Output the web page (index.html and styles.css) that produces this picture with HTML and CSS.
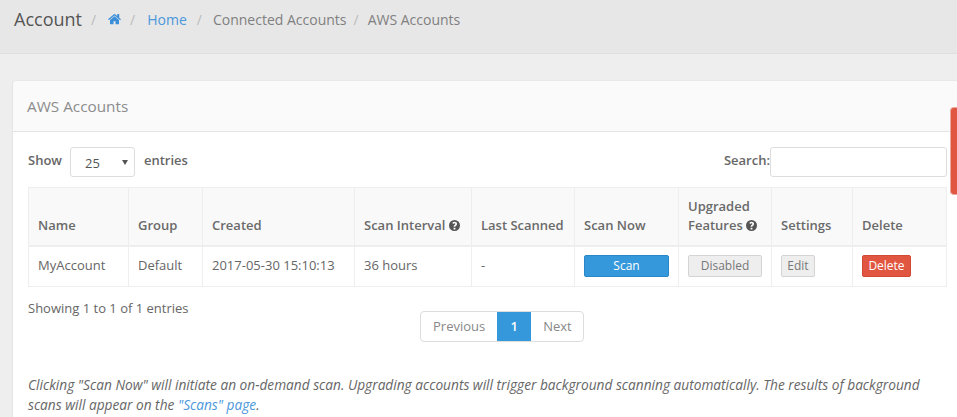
FILE: index.html
```html
<!DOCTYPE html>
<html lang="en">
<head>
<meta charset="utf-8">
<title>AWS Accounts</title>
<link rel="stylesheet" href="styles.css">
</head>
<body>
<header class="page-bar">
  <h1 class="page-title">Account</h1>
  <ol class="crumbs">
    <li class="sep first">/</li>
    <li><a href="#" class="home-icon"><svg width="13" height="11" viewBox="0 0 1664 1408"><path fill="currentColor" d="M1408 768v480q0 26-19 45t-45 19H960V928H704v384H320q-26 0-45-19t-19-45V768q0-1 .5-3t.5-3l575-474 575 474q1 2 1 6zm223-69-62 74q-8 9-21 11h-3q-13 0-21-7L832 200 140 777q-12 8-24 7-13-2-21-11l-62-74q-8-10-7-23.500t11-21.500L756 27q32-27 76-27t76 27l272 227V37q0-14 9-23t23-9h192q14 0 23 9t9 23v454l219 182q10 8 11 21.500t-7 23.500z"/></svg></a></li>
    <li class="sep">/</li>
    <li><a href="#" class="link home-link">Home</a></li>
    <li class="sep">/</li>
    <li class="crumb-a">Connected Accounts</li>
    <li class="sep">/</li>
    <li>AWS Accounts</li>
  </ol>
</header>
<main class="content">
  <section class="card">
    <div class="card-head">AWS Accounts</div>
    <div class="card-body">
      <div class="controls">
        <div class="length">
          <span class="bold">Show</span>
          <span class="select">25<svg class="caret" width="6" height="5" viewBox="0 0 6 5"><path fill="#555" d="M0 0h6L3 5z"/></svg></span>
          <span class="bold">entries</span>
        </div>
        <div class="search">
          <span class="bold">Search:</span>
          <input class="search-input" type="text" aria-label="Search">
        </div>
      </div>
      <table class="grid">
        <colgroup>
          <col class="c1"><col class="c2"><col class="c3"><col class="c4"><col class="c5"><col class="c6"><col class="c7"><col class="c8"><col class="c9">
        </colgroup>
        <thead>
          <tr>
            <th>Name</th>
            <th>Group</th>
            <th>Created</th>
            <th>Scan Interval <svg class="help" width="11" height="11" viewBox="0 0 24 24"><path fill="#555" fill-rule="evenodd" d="M12 0a12 12 0 1 0 0 24 12 12 0 0 0 0-24zm2 20.500h-4v-3.700h4zm2.600-9.300c-.6.800-1.500 1.300-2.100 1.800-.5.400-.6.700-.6 1.800h-3.700c0-2.300.6-3.300 1.700-4.100.9-.7 1.900-1.100 1.900-2.200 0-.8-.7-1.300-1.700-1.300-1.100 0-1.900.6-2.600 1.500L7.100 6.700C8.300 5 10 4 12.200 4c2.800 0 5.300 1.500 5.300 4.300 0 1.200-.4 2.100-.9 2.900z"/></svg></th>
            <th>Last Scanned</th>
            <th>Scan Now</th>
            <th>Upgraded<br>Features <svg class="help" width="11" height="11" viewBox="0 0 24 24"><path fill="#555" fill-rule="evenodd" d="M12 0a12 12 0 1 0 0 24 12 12 0 0 0 0-24zm2 20.500h-4v-3.700h4zm2.600-9.300c-.6.800-1.500 1.300-2.100 1.800-.5.400-.6.700-.6 1.800h-3.700c0-2.300.6-3.300 1.700-4.100.9-.7 1.900-1.100 1.900-2.200 0-.8-.7-1.300-1.700-1.300-1.100 0-1.900.6-2.600 1.500L7.100 6.700C8.300 5 10 4 12.200 4c2.800 0 5.300 1.500 5.300 4.300 0 1.200-.4 2.100-.9 2.900z"/></svg></th>
            <th>Settings</th>
            <th>Delete</th>
          </tr>
        </thead>
        <tbody>
          <tr>
            <td>MyAccount</td>
            <td>Default</td>
            <td>2017-05-30 15:10:13</td>
            <td>36 hours</td>
            <td>-</td>
            <td class="cell-btn"><a href="#" class="btn btn-blue btn-wide">Scan</a></td>
            <td class="cell-btn"><a href="#" class="btn btn-grey btn-disabled">Disabled</a></td>
            <td class="cell-btn"><a href="#" class="btn btn-grey btn-edit">Edit</a></td>
            <td class="cell-btn"><a href="#" class="btn btn-red">Delete</a></td>
          </tr>
        </tbody>
      </table>
      <div class="table-foot">
        <div class="info">Showing 1 to 1 of 1 entries</div>
        <nav class="pager">
          <a href="#" class="page">Previous</a>
          <a href="#" class="page active">1</a>
          <a href="#" class="page">Next</a>
        </nav>
      </div>
      <p class="note">Clicking "Scan Now" will initiate an on-demand scan. Upgrading accounts will trigger background scanning automatically. The results of background scans will appear on the <a href="#" class="link">"Scans" page</a>.</p>
    </div>
  </section>
</main>
<div class="side-tab"></div>
</body>
</html>
```
FILE: styles.css
```css
* { box-sizing: border-box; }
html, body { margin: 0; height: 417px; overflow: hidden; }
body {
  position: relative;
  background: #eeeeee;
  font-family: "Open Sans", sans-serif;
  font-size: 13px;
  line-height: 20px;
  color: #666;
}
a { text-decoration: none; }
.link { color: #4b98dc; }
.page-bar {
  height: 54px;
  background: #e7e7e7;
  border-bottom: 1px solid #dfdfdf;
  display: flex;
  align-items: flex-start;
  padding: 7px 0 0 14px;
}
.page-title {
  margin: 0;
  font-size: 18px;
  font-weight: 400;
  line-height: 24px;
  color: #555;
}
.crumbs {
  list-style: none;
  display: flex;
  margin: 0;
  padding: 3px 0 0;
  color: #808080;
  font-size: 14px;
  line-height: 20px;
}
.sep { color: #bbb; margin: 0 9px; }
.sep.first { margin: 0 12px 0 9px; }
.home-icon { color: #3a8fd8; display: block; }
.home-icon svg { display: block; margin-top: 4px; }
.home-link { margin: 0 1px 0 3px; }
.crumb-a { margin-left: 2px; margin-right: -2px; }
.content { padding: 26px 0 0 13px; }
.card {
  background: #fff;
  border-radius: 4px 0 0 4px;
  box-shadow: -1px 0 0 #e4e4e4;
  height: 341px;
}
.card-head {
  height: 52px;
  background: #fafafa;
  border-bottom: 1px solid #e4e4e4;
  border-top: 1px solid #e8e8e8;
  border-radius: 4px 0 0 0;
  padding: 14px 0 0 14px;
  font-size: 15.300px;
  line-height: 22px;
  color: #8c8c8c;
}
.card-body { padding: 15px 10px 0 15px; }
.controls {
  display: flex;
  justify-content: space-between;
  align-items: flex-start;
  height: 40px;
}
.bold { font-weight: 600; color: #666; }
.length { display: flex; align-items: flex-start; line-height: 26px; }
.select {
  position: relative;
  display: block;
  width: 65px;
  height: 30px;
  margin: 0 9px 0 8px;
  padding: 2px 0 0 14px;
  background: #fff;
  border: 1px solid #ddd;
  border-radius: 3px;
  color: #555;
  font-size: 13px;
}
.caret { position: absolute; right: 6px; top: 12px; }
.search { display: flex; align-items: flex-start; line-height: 26px; }
.search-input {
  display: block;
  width: 177px;
  height: 30px;
  border: 1px solid #ddd;
  border-radius: 3px;
  background: #fff;
}
.grid {
  border-collapse: collapse;
  table-layout: fixed;
  width: 918px;
}
.c1 { width: 100px; }
.c2 { width: 74px; }
.c3 { width: 152px; }
.c4 { width: 117px; }
.c5 { width: 103px; }
.c6 { width: 104px; }
.c7 { width: 93px; }
.c8 { width: 81px; }
.c9 { width: 94px; }
.grid th, .grid td {
  border: 1px solid #eeeeee;
  padding: 0 9px;
  text-align: left;
}
.grid th {
  height: 58px;
  background: #f9f9f9;
  vertical-align: bottom;
  padding-bottom: 10px;
  font-weight: 600;
  line-height: 19px;
  color: #6a6a6a;
  border-bottom-width: 2px;
}
.grid td { height: 41px; vertical-align: middle; padding-bottom: 2px; }
.grid td.cell-btn { padding-bottom: 1px; }
.help { vertical-align: -1px; }
.btn {
  display: inline-block;
  height: 22px;
  padding: 0 6px;
  border-radius: 2px;
  font-size: 12px;
  line-height: 20px;
  text-align: center;
  vertical-align: middle;
}
.btn-wide { width: 85px; }
.btn-blue { background: #3498db; border: 1px solid #2a88c8; color: #fff; }
.btn-grey { background: #eeeeee; border: 1px solid #d4d4d4; color: #777; }
.btn-disabled { width: 74px; }
.btn-edit { width: 34px; padding: 0; }
.btn-red { background: #e15640; border: 1px solid #d24a34; color: #fff; width: 49px; padding: 0; }
.table-foot { display: flex; align-items: flex-start; height: 55px; padding-top: 11px; }
.info { width: 392px; flex: none; }
.pager {
  display: flex;
  height: 31px;
  margin-top: 13px;
  border: 1px solid #ddd;
  border-radius: 4px;
  background: #fff;
}
.page { color: #888; padding: 4px 11px 4px 12px; line-height: 21px; }
.page:first-child { padding-right: 12px; }
.page.active { background: #3498db; color: #fff; font-weight: 600; width: 34px; padding: 4px 0; text-align: center; }
.note { margin: 33px 0 0; font-size: 13.700px; font-style: italic; color: #666; }
.side-tab {
  position: absolute;
  left: 950px;
  top: 107px;
  width: 7px;
  height: 88px;
  background: #e15640;
  border: 1px solid #e8a99e;
  border-right: 0;
  border-radius: 4px 0 0 4px;
}
```
